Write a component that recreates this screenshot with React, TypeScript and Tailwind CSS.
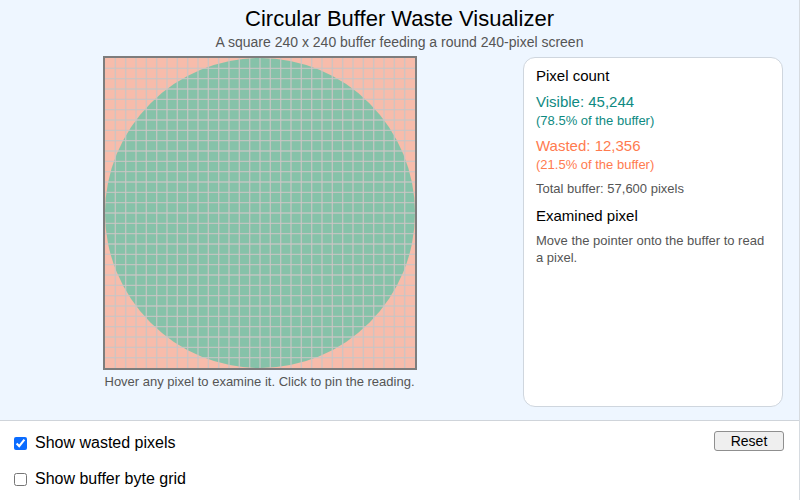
const CELLS = 30;
const SIZE = 310;

function BufferView() {
  const step = SIZE / CELLS;
  const lines = [];
  for (let i = 1; i < CELLS; i++) {
    const p = i * step;
    lines.push(<line key={`v${i}`} x1={p} y1={0} x2={p} y2={SIZE} />);
    lines.push(<line key={`h${i}`} x1={0} y1={p} x2={SIZE} y2={p} />);
  }
  return (
    <div className="border-2 border-[#7d7d7d]">
      <svg width={SIZE} height={SIZE} viewBox={`0 0 ${SIZE} ${SIZE}`} className="block">
        <rect width={SIZE} height={SIZE} fill="#f7bcab" />
        <circle cx={SIZE / 2} cy={SIZE / 2} r={SIZE / 2} fill="#86c2a9" />
        <g stroke="#c9c6c4" strokeOpacity={0.85} strokeWidth={1.4}>
          {lines}
        </g>
      </svg>
    </div>
  );
}

function StatsPanel() {
  return (
    <aside className="flex h-[350px] w-[260px] flex-col rounded-xl border border-[#cfd6de] bg-white px-3 pt-2">
      <h3 className="text-[15px] leading-[20px] text-black">Pixel count</h3>
      <div className="mt-[6px] text-[15px] leading-[20px] text-[#0e8a82]">Visible: 45,244</div>
      <div className="text-[13px] leading-[18px] text-[#0e8a82]">(78.5% of the buffer)</div>
      <div className="mt-[6px] text-[15px] leading-[20px] text-[#ff7b4f]">Wasted: 12,356</div>
      <div className="text-[13px] leading-[18px] text-[#ff7b4f]">(21.5% of the buffer)</div>
      <div className="mt-[6px] text-[13px] leading-[18px] text-[#555]">Total buffer: 57,600 pixels</div>
      <h3 className="mt-[8px] text-[15px] leading-[20px] text-black">Examined pixel</h3>
      <p className="mt-[6px] text-[13px] leading-[17px] text-[#555]">
        Move the pointer onto the buffer to read a pixel.
      </p>
    </aside>
  );
}

export default function App() {
  return (
    <div className="h-[500px] w-[800px] overflow-hidden border-r border-[#d6dbe0] bg-white font-['Liberation_Sans',Arial,sans-serif]">
      <div className="flex h-[421px] flex-col border-b border-[#cfd4da] bg-[#eef6ff]">
        <h1 className="pt-[5px] text-center text-[22px] leading-[28px] text-black">Circular Buffer Waste Visualizer</h1>
        <p className="text-center text-[14px] leading-[18px] text-[#555]">
          A square 240 x 240 buffer feeding a round 240-pixel screen
        </p>
        <div className="mt-[5px] flex gap-[20px] px-4">
          <div className="flex w-[488px] flex-col items-center">
            <BufferView />
            <p className="mt-[4px] text-[13px] leading-[16px] text-[#555]">
              Hover any pixel to examine it. Click to pin the reading.
            </p>
          </div>
          <div className="pt-[1px]">
            <StatsPanel />
          </div>
        </div>
      </div>
      <div className="flex justify-between px-[14px] pt-[10px]">
        <div className="flex flex-col gap-[16px] pt-[2px]">
          <label className="flex items-center gap-[8px] text-[16px] leading-[20px] text-black">
            <input type="checkbox" defaultChecked className="h-[13px] w-[13px] accent-[#0b6cff]" />
            Show wasted pixels
          </label>
          <label className="flex items-center gap-[8px] text-[16px] leading-[20px] text-black">
            <input type="checkbox" className="h-[13px] w-[13px]" />
            Show buffer byte grid
          </label>
        </div>
        <button
          type="button"
          className="mr-[1px] h-[20px] w-[70px] rounded-[3px] border border-[#8f8f8f] bg-[#efefef] text-[14px] leading-[18px] text-black"
        >
          Reset
        </button>
      </div>
    </div>
  );
}
